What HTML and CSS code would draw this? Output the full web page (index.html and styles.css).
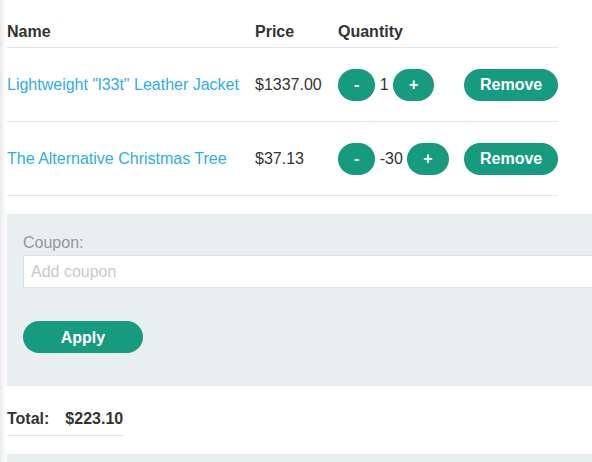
FILE: index.html
```html
<!DOCTYPE html>
<html lang="en">
<head>
<meta charset="utf-8">
<title>Cart</title>
<link rel="stylesheet" href="styles.css">
</head>
<body>
<div class="page">
  <div class="cart">
    <div class="row head">
      <div class="cell">Name</div>
      <div class="cell">Price</div>
      <div class="cell">Quantity</div>
      <div class="cell"></div>
    </div>
    <div class="row item">
      <div class="cell"><a class="link" href="#">Lightweight "l33t" Leather Jacket</a></div>
      <div class="cell">$1337.00</div>
      <div class="cell qty"><button class="btn">-</button><span>1</span><button class="btn">+</button></div>
      <div class="cell"><button class="btn">Remove</button></div>
    </div>
    <div class="row item">
      <div class="cell"><a class="link" href="#">The Alternative Christmas Tree</a></div>
      <div class="cell">$37.13</div>
      <div class="cell qty"><button class="btn">-</button><span>-30</span><button class="btn">+</button></div>
      <div class="cell"><button class="btn">Remove</button></div>
    </div>
  </div>

  <form class="coupon">
    <label class="coupon-label" for="coupon">Coupon:</label>
    <input class="coupon-input" id="coupon" type="text" placeholder="Add coupon">
    <button class="btn apply" type="button">Apply</button>
  </form>

  <div class="total">
    <span class="total-label">Total:</span>
    <span class="total-value">$223.10</span>
  </div>

  <div class="next-box"></div>
</div>
</body>
</html>
```

FILE: styles.css
```css
html {
  overflow: hidden;
}
body {
  margin: 0;
  background: linear-gradient(to right, #e9e9e9 0, #f6f6f6 3px, #ffffff 6px);
  font-family: "Liberation Sans", Arial, sans-serif;
  font-size: 16px;
  color: #333333;
  min-height: 462px;
}
.page {
  padding-left: 7px;
}
.cart {
  width: 551px;
}
.row {
  display: grid;
  grid-template-columns: 248px 83px 126px 94px;
  border-bottom: 1px solid #e5e5e5;
}
.head {
  height: 47px;
  align-items: end;
  font-weight: bold;
  line-height: 18px;
}
.head .cell {
  padding-bottom: 6px;
}
.item {
  height: 73px;
  align-items: center;
  line-height: 18px;
}
.link {
  color: #2eade6;
  text-decoration: none;
}
.qty {
  display: flex;
  align-items: center;
  gap: 4.4px;
  white-space: nowrap;
}
.qty span {
  padding-top: 1px;
}
.btn {
  font-family: "Liberation Sans", Arial, sans-serif;
  font-size: 16px;
  font-weight: bold;
  color: #ffffff;
  background: #169b7f;
  border: 0;
  border-radius: 16px;
  height: 32px;
  padding: 0 16px;
  line-height: 32px;
  vertical-align: middle;
  cursor: pointer;
}
.coupon {
  margin-top: 18px;
  width: 700px;
  background: #e9eef1;
  padding: 20px 16px 33px;
  display: flex;
  flex-direction: column;
  align-items: flex-start;
}
.coupon-label {
  color: #999999;
  line-height: 18px;
}
.coupon-input {
  margin-top: 3px;
  width: 100%;
  box-sizing: border-box;
  height: 33px;
  border: 1px solid #dfe2e3;
  background: #ffffff;
  padding: 1px 7px 0;
  font-family: "Liberation Sans", Arial, sans-serif;
  font-size: 16px;
  color: #333333;
  outline: none;
}
.coupon-input::placeholder {
  color: #c8c8c8;
}
.apply {
  margin-top: 33px;
  width: 120px;
  padding: 1px 0 0;
}
.total {
  margin-top: 24px;
  display: inline-flex;
  gap: 16px;
  font-weight: bold;
  line-height: 18px;
  padding-bottom: 7px;
  border-bottom: 1px solid #e5e5e5;
}
.next-box {
  margin-top: 18px;
  width: 700px;
  height: 40px;
  background: #e9eef1;
}
```
